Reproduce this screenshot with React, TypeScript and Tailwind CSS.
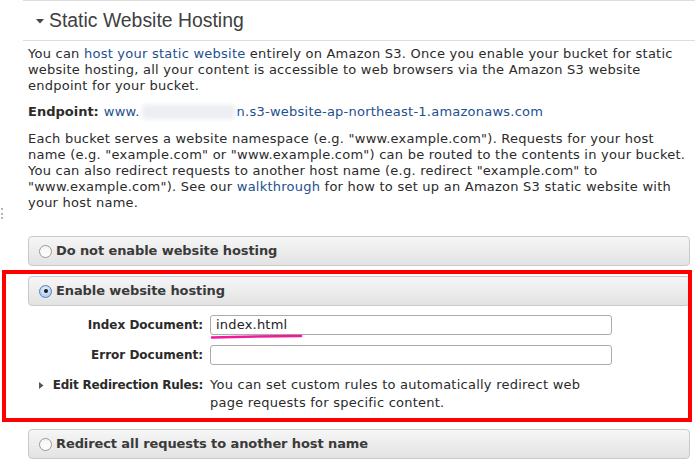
import React from "react";

const F = { fontFamily: '"DejaVu Sans", Verdana, sans-serif' };

function Radio({ checked }: { checked?: boolean }) {
  return (
    <span
      className={
        "flex h-[13px] w-[13px] shrink-0 items-center justify-center rounded-full border " +
        (checked
          ? "border-[#5a7fb5] bg-[radial-gradient(circle_at_50%_35%,#e6f1ff,#9cc3f0)]"
          : "border-[#9a9a9a] bg-[linear-gradient(#f4f4f4,#ffffff)]")
      }
    >
      {checked && <span className="h-[4px] w-[4px] rounded-full bg-[#1b1b1b]" />}
    </span>
  );
}

function Panel({ label, checked }: { label: string; checked?: boolean }) {
  return (
    <div className="ml-[28px] flex h-[30px] w-[662px] items-center gap-[4px] rounded-[4px] border border-[#c9c9c9] bg-[linear-gradient(#f6f6f6,#e3e3e3)] pl-[10px]">
      <Radio checked={checked} />
      <span className="text-[13px] font-bold tracking-[-0.1px] text-[#3a3a3a]" style={F}>
        {label}
      </span>
    </div>
  );
}

export default function App() {
  const link = "text-[#24508e]";
  return (
    <div className="relative h-[473px] w-[695px] overflow-hidden bg-white text-[#2b2b2b]" style={F}>
      {/* top rule */}
      <div className="ml-[23px] h-[1px] bg-[#dedede]" />
      {/* header */}
      <div className="flex h-[39px] items-center pl-[36px]">
        <svg width="8" height="5" viewBox="0 0 8 5" className="mr-[5px] mt-[1px]">
          <path d="M0 0h8L4 4.5z" fill="#444" />
        </svg>
        <span className="text-[19.4px] text-[#404040]" style={{ fontFamily: '"Liberation Sans", Arial, sans-serif' }}>
          Static Website Hosting
        </span>
      </div>
      <div className="ml-[23px] h-[1px] bg-[#dedede]" />

      <div className="pl-[28px] text-[13px] leading-[16px] tracking-[0.24px]">
        <p className="mt-[5px] whitespace-nowrap">
          You can <span className={link}>host your static website</span> entirely on Amazon S3. Once you enable your bucket for static
          <br />
          website hosting, all your content is accessible to web browsers via the Amazon S3 website
          <br />
          endpoint for your bucket.
        </p>
        <p className="mt-[10px] flex items-center whitespace-nowrap">
          <span className="font-bold tracking-[0px]">Endpoint:</span>
          <span className={"ml-[5px] " + link}>www.</span>
          <span className="relative inline-block h-[16px] w-[97px]">
            <span className="absolute inset-x-[2px] inset-y-[1px] rounded-[3px] bg-[#eceef3] blur-[2px]" />
          </span>
          <span className={link}>n.s3-website-ap-northeast-1.amazonaws.com</span>
        </p>
        <p className="mt-[11px] whitespace-nowrap">
          Each bucket serves a website namespace (e.g. "www.example.com"). Requests for your host
          <br />
          name (e.g. "example.com" or "www.example.com") can be routed to the contents in your bucket.
          <br />
          You can also redirect requests to another host name (e.g. redirect "example.com" to
          <br />
          "www.example.com"). See our <span className={link}>walkthrough</span> for how to set up an Amazon S3 static website with
          <br />
          your host name.
        </p>
      </div>

      <div className="mt-[25px]">
        <Panel label="Do not enable website hosting" />
      </div>
      <div className="mt-[10px]">
        <Panel label="Enable website hosting" checked />
      </div>

      {/* form */}
      <div className="text-[13px]">
        <div className="mt-[9px] flex items-center">
          <span className="w-[203px] text-right text-[12px] font-bold">Index Document:</span>
          <div className="ml-[7px] flex h-[20px] w-[402px] items-center rounded-[3px] border border-[#ababab] bg-white pl-[5px] tracking-[0.2px] text-[#222]">
            index.html
          </div>
        </div>
        <div className="mt-[10px] flex items-center">
          <span className="w-[203px] text-right text-[12px] font-bold">Error Document:</span>
          <div className="ml-[7px] h-[20px] w-[402px] rounded-[3px] border border-[#ababab] bg-white" />
        </div>
        <div className="mt-[11px] flex items-start leading-[18px]">
          <div className="flex w-[203px] items-center justify-end">
            <svg width="5" height="7" viewBox="0 0 5 7" className="mr-[9px]">
              <path d="M0 0l4.5 3.5L0 7z" fill="#555" />
            </svg>
            <span className="text-[12px] font-bold tracking-[-0.2px]">Edit Redirection Rules:</span>
          </div>
          <p className="ml-[7px] whitespace-nowrap tracking-[0.24px]">
            You can set custom rules to automatically redirect web
            <br />
            page requests for specific content.
          </p>
        </div>
      </div>

      <div className="mt-[17px]">
        <Panel label="Redirect all requests to another host name" />
      </div>
      <div className="ml-[28px] mt-[14px] h-[1px] bg-[#e4e4e4]" />

      {/* left edge dotted handle */}
      <div className="absolute left-0 top-[208px] h-[11px] w-[3px] border-r-2 border-dotted border-[#b5b5b5]" />

      {/* annotation: red box */}
      <div className="pointer-events-none absolute left-[2px] top-[270px] h-[152px] w-[690px] border-4 border-[#ff0000]" />
      {/* annotation: magenta underline */}
      <svg className="pointer-events-none absolute left-[210px] top-[333px]" width="94" height="8" viewBox="0 0 94 8">
        <path d="M2 4.5 Q45 3.2 91 3" stroke="#f0199e" strokeWidth="2.6" fill="none" strokeLinecap="round" />
      </svg>
    </div>
  );
}
